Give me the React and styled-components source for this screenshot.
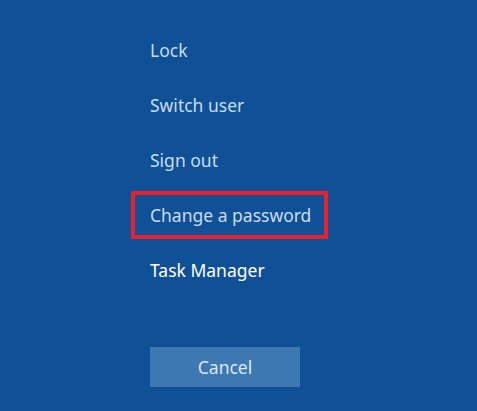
import styled, { createGlobalStyle } from 'styled-components'

const GlobalStyle = createGlobalStyle`
  html, body {
    margin: 0;
    padding: 0;
    background: #0f5097;
  }
`

const Screen = styled.main`
  display: flex;
  width: 477px;
  height: 411px;
  box-sizing: border-box;
  flex-direction: column;
  padding: 22px 0 0 150px;
  overflow: hidden;
  background: #0f5097;
  font-family: 'Noto Sans', 'Open Sans', sans-serif;
`

const Menu = styled.ul`
  display: flex;
  flex-direction: column;
  margin: 0;
  padding: 0;
  list-style: none;
`

const MenuRow = styled.li`
  display: flex;
  height: 55px;
  align-items: center;
`

const MenuLabel = styled.span`
  display: inline-block;
  margin-left: -19px;
  padding: 10px 13px 10px 15px;
  border: 4px solid ${({ $highlighted }) => ($highlighted ? '#e8202c' : 'transparent')};
  color: ${({ $strong }) => ($strong ? '#ffffff' : '#c9dcef')};
  font-size: 17.5px;
  line-height: 20px;
  white-space: nowrap;
  cursor: pointer;
`

const CancelButton = styled.button`
  width: 150px;
  height: 40px;
  margin-top: 50px;
  padding: 0;
  border: 0;
  color: #dce8f4;
  background: #3d78b3;
  font-family: inherit;
  font-size: 17.5px;
  cursor: pointer;
`

const items = [
  { label: 'Lock' },
  { label: 'Switch user' },
  { label: 'Sign out' },
  { label: 'Change a password', highlighted: true },
  { label: 'Task Manager', strong: true },
]

function App() {
  return (
    <>
      <GlobalStyle />
      <Screen>
        <Menu>
          {items.map((item) => (
            <MenuRow key={item.label}>
              <MenuLabel $highlighted={item.highlighted} $strong={item.strong}>
                {item.label}
              </MenuLabel>
            </MenuRow>
          ))}
        </Menu>
        <CancelButton type="button">Cancel</CancelButton>
      </Screen>
    </>
  )
}

export default App
